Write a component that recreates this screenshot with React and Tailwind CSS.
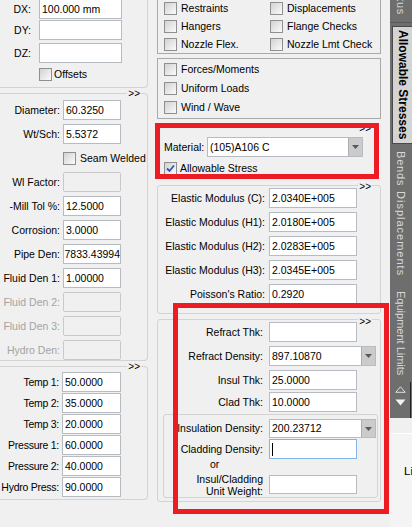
import React from 'react';

// Win32-style "Pipe element" property page, right edge tab strip

function Box({ value = '', className = '', disabled = false, focused = false, end = false }) {
  let tone = 'bg-white border-[#b7bcc2]';
  if (disabled) tone = 'bg-[#f0f0f0] border-[#c9c9c9] rounded-[2px]';
  if (focused) tone = 'bg-white border-[#84b4e4]';
  return (
    <div
      className={`shrink-0 border flex items-center overflow-hidden whitespace-nowrap ${
        end ? 'justify-end' : 'pl-[2px]'
      } ${tone} ${className}`}
    >
      {value}
      {focused && <span className="w-px h-[13px] bg-black" />}
    </div>
  );
}

function Combo({ value, className = '' }) {
  return (
    <div className={`shrink-0 flex border border-[#b7bcc2] bg-white ${className}`}>
      <div className="flex-1 flex items-center pl-[2px] whitespace-nowrap overflow-hidden">{value}</div>
      <div className="w-[14px] bg-[#cbcbcb] border-l border-[#adadad] flex items-center justify-center">
        <svg width="7" height="4" viewBox="0 0 7 4">
          <path d="M0 0h7L3.5 4z" fill="#5a5a5a" />
        </svg>
      </div>
    </div>
  );
}

function Check({ checked = false }) {
  return (
    <span className="shrink-0 w-[13px] h-[13px] border border-[#8e8f8f] bg-linear-to-br from-[#d2d2d2] to-[#fbfbfb] flex items-center justify-center">
      {checked && (
        <svg width="9" height="9" viewBox="0 0 9 9">
          <path d="M1 4.5 3.5 7 8 1.5" fill="none" stroke="#2a55b8" strokeWidth="1.8" />
        </svg>
      )}
    </span>
  );
}

function More({ className = '' }) {
  return (
    <span className={`absolute bg-[#f0f0f0] px-px text-[10px] leading-[9px] ${className}`}>&gt;&gt;</span>
  );
}

function Label({ children, className = '', dim = false }) {
  return (
    <div className={`shrink-0 flex justify-end whitespace-nowrap ${dim ? 'text-[#a3a3a3]' : ''} ${className}`}>
      {children}
    </div>
  );
}

function CheckItem({ label, checked, gap = 'ml-[4px]' }) {
  return (
    <div className="flex items-center">
      <Check checked={checked} />
      <span className={`${gap} whitespace-nowrap`}>{label}</span>
    </div>
  );
}

const pipeRows = [
  { label: 'Diameter:', value: '60.3250' },
  { label: 'Wt/Sch:', value: '5.5372' },
  { seam: true },
  { label: 'Wl Factor:', disabled: true },
  { label: '-Mill Tol %:', value: '12.5000' },
  { label: 'Corrosion:', value: '3.0000' },
  { label: 'Pipe Den:', value: '7833.43994', end: true },
  { label: 'Fluid Den 1:', value: '1.00000' },
  { label: 'Fluid Den 2:', disabled: true, dim: true },
  { label: 'Fluid Den 3:', disabled: true, dim: true },
  { label: 'Hydro Den:', disabled: true, dim: true },
];

const loadRows = [
  ['Temp 1:', '50.0000'],
  ['Temp 2:', '35.0000'],
  ['Temp 3:', '20.0000'],
  ['Pressure 1:', '60.0000'],
  ['Pressure 2:', '40.0000'],
  ['Hydro Press:', '90.0000'],
];

const modulusRows = [
  ['Elastic Modulus (C):', '2.0340E+005'],
  ['Elastic Modulus (H1):', '2.0180E+005'],
  ['Elastic Modulus (H2):', '2.0283E+005'],
  ['Elastic Modulus (H3):', '2.0345E+005'],
  ["Poisson's Ratio:", '0.2920'],
];

function TabText({ children, className = '' }) {
  return (
    <span className={`[writing-mode:vertical-rl] whitespace-nowrap leading-[14px] ${className}`}>{children}</span>
  );
}

export default function App() {
  return (
    <div className="relative w-[412px] h-[527px] overflow-hidden bg-[#f0f0f0] text-black text-[10.5px] leading-[13px] font-['Liberation_Sans',Arial,sans-serif] flex">
      {/* Left column */}
      <div className="w-[148px] shrink-0 flex flex-col">
        {/* Offsets */}
        <div className="h-[88px] border-r border-b border-[#d3d3d3] rounded-br-[4px]">
          <div className="-mt-px flex items-center h-[20px]">
            <Label className="w-[31px]">DX:</Label>
            <Box className="ml-[8px] w-[83px] h-[20px]" value="100.000 mm" />
          </div>
          <div className="mt-px flex items-center h-[20px]">
            <Label className="w-[31px]">DY:</Label>
            <Box className="ml-[8px] w-[83px] h-[20px]" />
          </div>
          <div className="mt-[3px] flex items-center h-[20px]">
            <Label className="w-[31px]">DZ:</Label>
            <Box className="ml-[8px] w-[83px] h-[20px]" />
          </div>
          <div className="mt-[5px] pl-[39px]">
            <CheckItem label="Offsets" gap="ml-[2px]" />
          </div>
        </div>

        {/* Pipe data */}
        <div className="relative mt-[5px] border-t border-r border-b border-[#d3d3d3] rounded-r-[4px] pt-[6px] flex flex-col gap-[4px]">
          <More className="-top-[5px] right-[6px]" />
          {pipeRows.map((r, i) =>
            r.seam ? (
              <div key={i} className="h-[20px] flex items-center pl-[63px]">
                <CheckItem label="Seam Welded" />
              </div>
            ) : (
              <div key={i} className="h-[20px] flex items-center">
                <Label className="w-[60px]" dim={r.dim}>
                  {r.label}
                </Label>
                <Box
                  className="ml-[3px] w-[58px] h-[20px]"
                  value={r.value}
                  disabled={r.disabled}
                  end={r.end}
                />
              </div>
            )
          )}
        </div>

        {/* Temperatures / pressures */}
        <div className="relative mt-[5px] border-t border-r border-b border-[#d3d3d3] rounded-r-[4px] pt-[5px] pb-[2px] flex flex-col gap-px">
          <More className="-top-[5px] right-[6px]" />
          {loadRows.map(([l, v]) => (
            <div key={l} className="h-[20px] flex items-center">
              <Label className="w-[59px] tracking-[-0.25px]">{l}</Label>
              <Box className="ml-[3px] w-[59px] h-[20px]" value={v} />
            </div>
          ))}
        </div>
      </div>

      {/* Middle column */}
      <div className="ml-[9px] w-[224px] shrink-0 flex flex-col">
        <div className="h-[54px] border-x border-b border-[#a9a9a9] pl-[6px]">
          <div className="-mt-px grid grid-cols-[106px_1fr] auto-rows-[18px] items-center">
            <CheckItem label="Restraints" />
            <CheckItem label="Displacements" />
            <CheckItem label="Hangers" />
            <CheckItem label="Flange Checks" />
            <CheckItem label="Nozzle Flex." />
            <CheckItem label="Nozzle Lmt Check" />
          </div>
        </div>

        <div className="mt-[4px] border border-[#a9a9a9] pl-[6px] py-px flex flex-col">
          <div className="h-[19px] flex items-center">
            <CheckItem label="Forces/Moments" />
          </div>
          <div className="h-[19px] flex items-center">
            <CheckItem label="Uniform Loads" />
          </div>
          <div className="h-[19px] flex items-center">
            <CheckItem label="Wind / Wave" />
          </div>
        </div>

        {/* Material */}
        <div className="relative mt-[3px] h-[63px] pl-[7px] pt-[15px]">
          <More className="top-[2px] right-[9px]" />
          <div className="flex items-center h-[20px]">
            <span className="w-[43px] shrink-0">Material:</span>
            <Combo className="w-[156px] h-[20px]" value="(105)A106 C" />
          </div>
          <div className="mt-[5px]">
            <CheckItem label="Allowable Stress" checked gap="ml-[3px]" />
          </div>
        </div>

        {/* Elastic properties */}
        <div className="relative border border-[#d3d3d3] rounded-[3px] pt-[2px] pb-[9px] flex flex-col gap-[4px]">
          <More className="-top-[4px] right-[8px]" />
          {modulusRows.map(([l, v]) => (
            <div key={l} className="h-[20px] flex items-center">
              <Label className="w-[107px]">{l}</Label>
              <Box className="ml-[4px] w-[88px] h-[20px]" value={v} />
            </div>
          ))}
        </div>

        {/* Insulation / refractory */}
        <div className="relative mt-[5px] border border-[#d3d3d3] rounded-[3px] pt-[2px] pb-[3px]">
          <More className="-top-[3px] right-[8px]" />
          <div className="h-[20px] flex items-center">
            <Label className="w-[105px]">Refract Thk:</Label>
            <Box className="ml-[6px] w-[88px] h-[20px]" />
          </div>
          <div className="mt-[4px] h-[20px] flex items-center">
            <Label className="w-[105px]">Refract Density:</Label>
            <Combo className="ml-[6px] w-[107px] h-[20px]" value="897.10870" />
          </div>
          <div className="mt-[4px] h-[20px] flex items-center">
            <Label className="w-[105px]">Insul Thk:</Label>
            <Box className="ml-[6px] w-[88px] h-[20px]" value="25.0000" />
          </div>
          <div className="mt-[2px] h-[20px] flex items-center">
            <Label className="w-[105px]">Clad Thk:</Label>
            <Box className="ml-[6px] w-[88px] h-[20px]" value="10.0000" />
          </div>

          <div className="mt-[2px] ml-[5px] mr-[2px] border border-[#d3d3d3] rounded-[3px] pt-[4px]">
            <div className="h-[19px] flex items-center">
              <Label className="w-[99px]">Insulation Density:</Label>
              <Combo className="ml-[6px] w-[107px] h-[19px]" value="200.23712" />
            </div>
            <div className="mt-px h-[20px] flex items-center">
              <Label className="w-[99px]">Cladding Density:</Label>
              <Box className="ml-[6px] w-[88px] h-[20px]" focused />
            </div>
            <div className="h-[10px] leading-[10px] pl-[46px]">or</div>
            <div className="mt-[4px] h-[24px] flex items-start">
              <div className="w-[99px] shrink-0 text-right leading-[12px] whitespace-nowrap">
                Insul/Cladding
                <br />
                Unit Weight:
              </div>
              <Box className="ml-[6px] mt-[2px] w-[88px] h-[19px]" />
            </div>
          </div>
        </div>
      </div>

      {/* Right tab strip */}
      <div className="ml-[9px] w-[22px] shrink-0 flex flex-col">
        <div className="h-[418px] bg-[#6e6e6e] flex flex-col overflow-hidden text-[#d8d8d8] text-[11px]">
          <div className="h-[23px] flex flex-col justify-end items-center pb-[7px] overflow-hidden border-b border-[#5a5a5a]">
            <TabText className="tracking-[0.6px]">Status</TabText>
          </div>
          <div className="mt-[3px] ml-[2px] h-[118px] bg-[#d4d4d4] border-l border-y border-[#4a4a4a] flex justify-center items-center text-black">
            <TabText className="font-bold text-[12px]">Allowable Stresses</TabText>
          </div>
          <div className="h-[45px] pt-[7px] flex justify-center">
            <TabText className="tracking-[0.8px]">Bends</TabText>
          </div>
          <div className="h-[98px] pt-[2px] flex justify-center">
            <TabText className="tracking-[1px]">Displacements</TabText>
          </div>
          <div className="h-[95px] pt-[4px] flex justify-center">
            <TabText>Equipment Limits</TabText>
          </div>
          <div className="flex-1 mr-px border-r border-[#202020] flex flex-col items-center pt-[4px] gap-[6px]">
            <svg width="11" height="7" viewBox="0 0 11 7">
              <path d="M5.5 0.8 10.2 6.3H0.8Z" fill="none" stroke="#e0e0e0" strokeWidth="1" />
            </svg>
            <svg width="11" height="7" viewBox="0 0 11 7">
              <path d="M0.5 0.5h10L5.5 6.5Z" fill="#f4f4f4" />
            </svg>
          </div>
        </div>
        <div className="h-[15px]" />
        <div className="flex-1 border-t border-white bg-[#f4f4f4] pl-[14px] pt-[31px] text-[11.5px]">Li</div>
      </div>

      {/* Annotation frames */}
      <div className="absolute left-[155px] top-[123px] w-[224px] h-[56px] border-[5px] border-[#ed1c24] pointer-events-none" />
      <div className="absolute left-[173px] top-[303px] w-[216px] h-[211px] border-[5px] border-[#ed1c24] pointer-events-none" />
    </div>
  );
}
